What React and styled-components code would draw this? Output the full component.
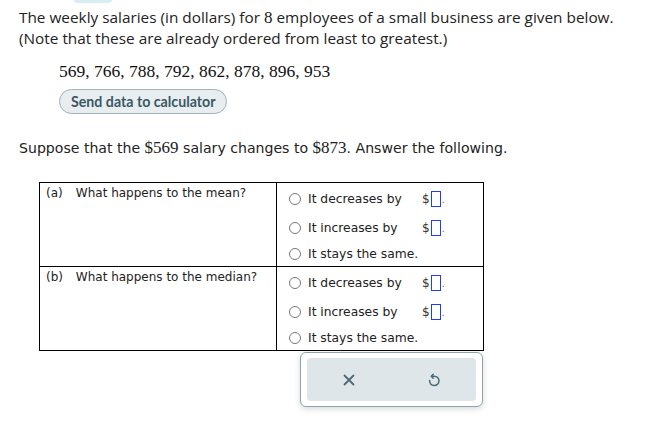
import React from "react";
import styled, { createGlobalStyle } from "styled-components";

const Global = createGlobalStyle`
  html, body { margin: 0; padding: 0; background: #fff; }
  body { font-family: "Open Sans", sans-serif; color: #222; }
`;

const Page = styled.div`
  position: relative;
  width: 645px;
  height: 434px;
  padding: 0 0 0 19px;
  box-sizing: border-box;
  overflow: hidden;
`;

const TopTab = styled.div`
  position: absolute;
  left: 73px;
  top: -8px;
  width: 40px;
  height: 11px;
  border-radius: 6px;
  background: #d6eef3;
`;

const Intro = styled.p`
  margin: 0;
  padding-top: 7px;
  font-size: 15.35px;
  line-height: 21px;
  color: #222;
`;

const Serif = styled.span`
  font-family: "Liberation Serif", serif;
  font-size: ${(p) => p.$size || 17}px;
`;

const DataBlock = styled.div`
  margin: 11px 0 0 40px;
  display: flex;
  flex-direction: column;
  align-items: flex-start;
  gap: 7px;
`;

const DataLine = styled.div`
  font-family: "Liberation Serif", serif;
  font-size: 17.5px;
  line-height: 22px;
  color: #111;
`;

const CalcButton = styled.button`
  height: 25px;
  padding: 0 11px;
  border-radius: 13px;
  border: 1px solid #9fb3ba;
  background: #e8eef0;
  color: #3b5866;
  font-family: "Lato", "Open Sans", sans-serif;
  font-weight: 700;
  font-size: 14.2px;
  cursor: pointer;
`;

const Question = styled.p`
  margin: 24px 0 0;
  font-family: "DejaVu Sans", sans-serif;
  font-size: 14.1px;
  line-height: 20px;
  color: #222;
`;

const Table = styled.table`
  margin: 24px 0 0 20px;
  border-collapse: collapse;
  font-family: "DejaVu Sans", sans-serif;
  font-size: 12px;
  color: #222;
`;

const LeftCell = styled.td`
  width: 237px;
  height: 84px;
  border: 1px solid #000;
  vertical-align: top;
  padding: 3px 6px 0;
  box-sizing: border-box;
`;

const Label = styled.span`
  display: inline-block;
  width: 26px;
`;

const RightCell = styled.td`
  width: 207px;
  border: 1px solid #000;
  vertical-align: top;
  padding: 2px 0 0 12px;
  box-sizing: border-box;
`;

const Options = styled.div`
  display: flex;
  flex-direction: column;
`;

const Option = styled.label`
  display: flex;
  align-items: center;
  height: ${(p) => p.$h}px;
`;

const Radio = styled.span`
  width: 12px;
  height: 12px;
  border-radius: 50%;
  border: 1px solid #777;
  box-sizing: border-box;
  margin-right: 7px;
  flex: none;
`;

const OptText = styled.span`
  width: 114px;
  font-size: 12.3px;
`;

const Dollar = styled.span`
  font-size: 12px;
  color: #333;
`;

const AnswerBox = styled.span`
  display: inline-block;
  width: 10px;
  height: 16px;
  border: 1.5px solid #1f3cff;
  box-sizing: border-box;
  margin-left: 1px;
`;

const Dot = styled.span`
  font-size: 9px;
  color: #555;
  margin-left: 1px;
  position: relative;
  top: 1px;
`;

const ToolWrap = styled.div`
  margin: 1px 0 0 281px;
  width: 183px;
  height: 55px;
  border: 1px solid #8ea4ac;
  border-radius: 6px;
  box-shadow: 0 2px 6px rgba(0, 0, 0, 0.15);
  padding: 5px 6px;
  box-sizing: border-box;
  background: #fff;
`;

const ToolInner = styled.div`
  height: 100%;
  background: #dfe6e9;
  border-radius: 4px;
  display: grid;
  grid-template-columns: 1fr 1fr;
  align-items: center;
  justify-items: center;
`;

const Icon = styled.svg`
  width: 16px;
  height: 16px;
  stroke: #4b6a77;
  fill: none;
  stroke-width: ${(p) => p.$w || 1.6};
  stroke-linecap: round;
  stroke-linejoin: round;
`;

const options = [
  { text: "It decreases by", box: true, h: 28 },
  { text: "It increases by", box: true, h: 29 },
  { text: "It stays the same.", box: false, h: 24 },
];

function OptionList() {
  return (
    <Options>
      {options.map((o) => (
        <Option key={o.text} $h={o.h}>
          <Radio />
          <OptText>{o.text}</OptText>
          {o.box && (
            <>
              <Dollar>$</Dollar>
              <AnswerBox />
              <Dot>.</Dot>
            </>
          )}
        </Option>
      ))}
    </Options>
  );
}

export default function App() {
  return (
    <Page>
      <Global />
      <TopTab />
      <Intro>
        The weekly salaries (in dollars) for <Serif $size={17}>8</Serif> employees of a small business are given below.
        <br />
        (Note that these are already ordered from least to greatest.)
      </Intro>
      <DataBlock>
        <DataLine>569, 766, 788, 792, 862, 878, 896, 953</DataLine>
        <CalcButton>Send data to calculator</CalcButton>
      </DataBlock>
      <Question>
        Suppose that the <Serif $size={17}>$569</Serif> salary changes to <Serif $size={17}>$873</Serif>. Answer the following.
      </Question>
      <Table>
        <tbody>
          <tr>
            <LeftCell>
              <Label>(a)</Label> What happens to the mean?
            </LeftCell>
            <RightCell>
              <OptionList />
            </RightCell>
          </tr>
          <tr>
            <LeftCell>
              <Label>(b)</Label> What happens to the median?
            </LeftCell>
            <RightCell>
              <OptionList />
            </RightCell>
          </tr>
        </tbody>
      </Table>
      <ToolWrap>
        <ToolInner>
          <Icon viewBox="0 0 16 16" $w={1.8}>
            <path d="M3.5 3.5 L12.5 12.5 M12.5 3.5 L3.5 12.5" />
          </Icon>
          <Icon viewBox="0 0 16 16" $w={1.5}>
            <path d="M5.6 4.2 L8.2 4.2 A4.7 4.7 0 1 1 3.6 8.4" />
            <path d="M7.2 2.2 L5.3 4.2 L7.2 6.2" />
          </Icon>
        </ToolInner>
      </ToolWrap>
    </Page>
  );
}
